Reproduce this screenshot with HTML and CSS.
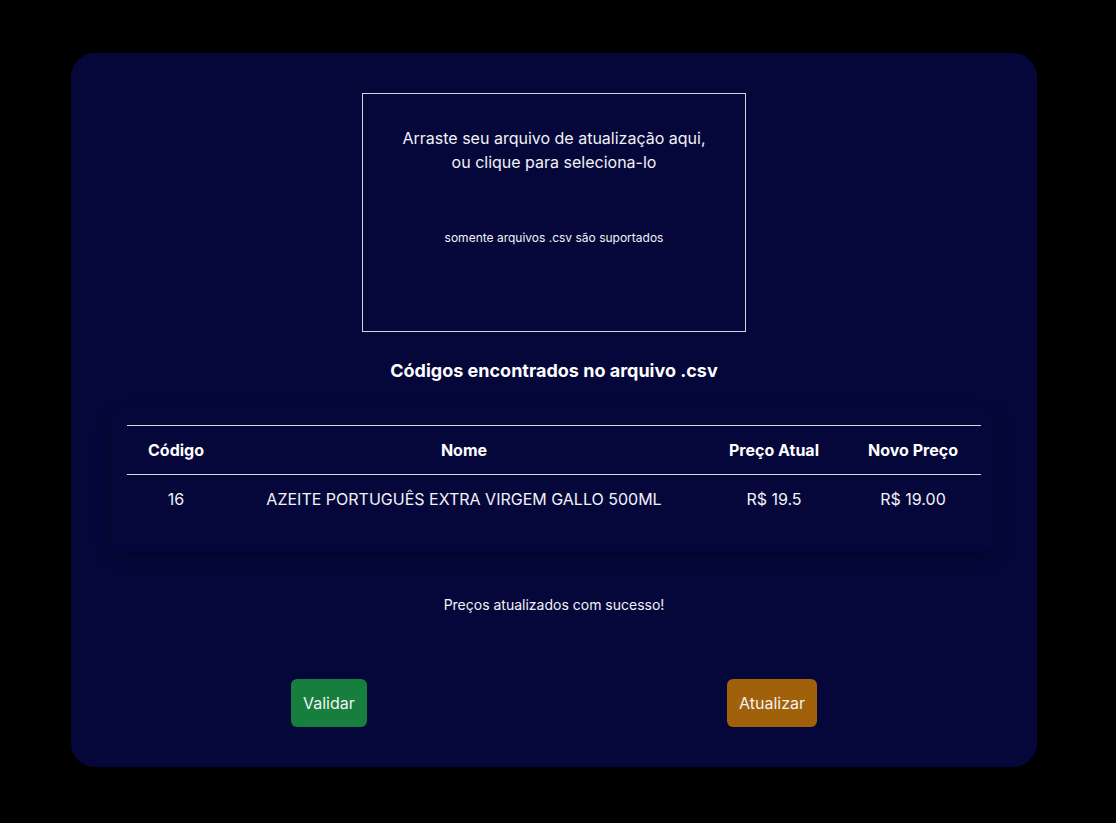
FILE: index.html
```html
<!DOCTYPE html>
<html lang="pt-BR">
<head>
<meta charset="utf-8">
<title>Atualizar preços</title>
<link rel="stylesheet" href="styles.css">
</head>
<body>
<main class="card">
  <div class="dropzone">
    <p class="drop-title">Arraste seu arquivo de atualização aqui,<br>ou clique para seleciona-lo</p>
    <p class="drop-note">somente arquivos .csv são suportados</p>
  </div>
  <h2 class="section-title">Códigos encontrados no arquivo .csv</h2>
  <div class="table-wrap">
    <table class="codes">
      <colgroup>
        <col class="c-code"><col class="c-name"><col class="c-cur"><col class="c-new">
      </colgroup>
      <thead>
        <tr><th>Código</th><th>Nome</th><th>Preço Atual</th><th>Novo Preço</th></tr>
      </thead>
      <tbody>
        <tr><td>16</td><td>AZEITE PORTUGUÊS EXTRA VIRGEM GALLO 500ML</td><td>R$ 19.5</td><td>R$ 19.00</td></tr>
      </tbody>
    </table>
  </div>
  <p class="message">Preços atualizados com sucesso!</p>
  <div class="actions">
    <button class="btn btn-validate">Validar</button>
    <button class="btn btn-update">Atualizar</button>
  </div>
</main>
</body>
</html>
```

FILE: styles.css
```css
* { box-sizing: border-box; }
html, body { margin: 0; padding: 0; }
body {
  background: #000;
  font-family: Inter, "Noto Sans", sans-serif;
  color: #f2f2f7;
  min-height: 823px;
  padding-top: 53px;
  padding-left: 71px;
}
.card {
  width: 966px;
  height: 714px;
  background: #05073a;
  border-radius: 24px;
  padding: 40px 0 40px;
  display: flex;
  flex-direction: column;
  align-items: center;
}
.dropzone {
  width: 384px;
  height: 239px;
  border: 1px solid #d4d4dc;
  padding-top: 32px;
  text-align: center;
}
.drop-title {
  margin: 0;
  font-size: 16px;
  line-height: 24px;
}
.drop-note {
  margin: 56px 0 0;
  font-size: 12px;
  line-height: 16px;
}
.section-title {
  margin: 27px 0 0;
  font-size: 18px;
  line-height: 24px;
  font-weight: 700;
  color: #fff;
}
.table-wrap {
  margin-top: 26px;
  width: 886px;
  padding: 16px 16px 28px;
  border-radius: 12px;
  box-shadow: 0 6px 16px rgba(0, 0, 0, 0.28);
}
.codes {
  width: 854px;
  border-collapse: collapse;
  table-layout: fixed;
  font-size: 16px;
  text-align: center;
}
.c-code { width: 98px; }
.c-name { width: 478px; }
.c-cur { width: 142px; }
.c-new { width: 136px; }
.codes thead tr {
  border-top: 1px solid #d8d8e0;
  border-bottom: 1px solid #d8d8e0;
}
.codes th {
  height: 49px;
  font-weight: 700;
  color: #fff;
  padding: 0;
}
.codes td {
  height: 48px;
  padding: 0;
  font-weight: 400;
}
.message {
  margin: 44px 0 0;
  font-size: 14px;
  line-height: 20px;
}
.actions {
  margin-top: 64px;
  width: 526px;
  display: flex;
  justify-content: space-between;
}
.btn {
  font-family: inherit;
  font-size: 16px;
  line-height: 24px;
  padding: 12px;
  border: none;
  border-radius: 6px;
  color: #f2f2f2;
  cursor: pointer;
}
.btn-validate { background: #177f3e; }
.btn-update { background: #a1600a; }
```
